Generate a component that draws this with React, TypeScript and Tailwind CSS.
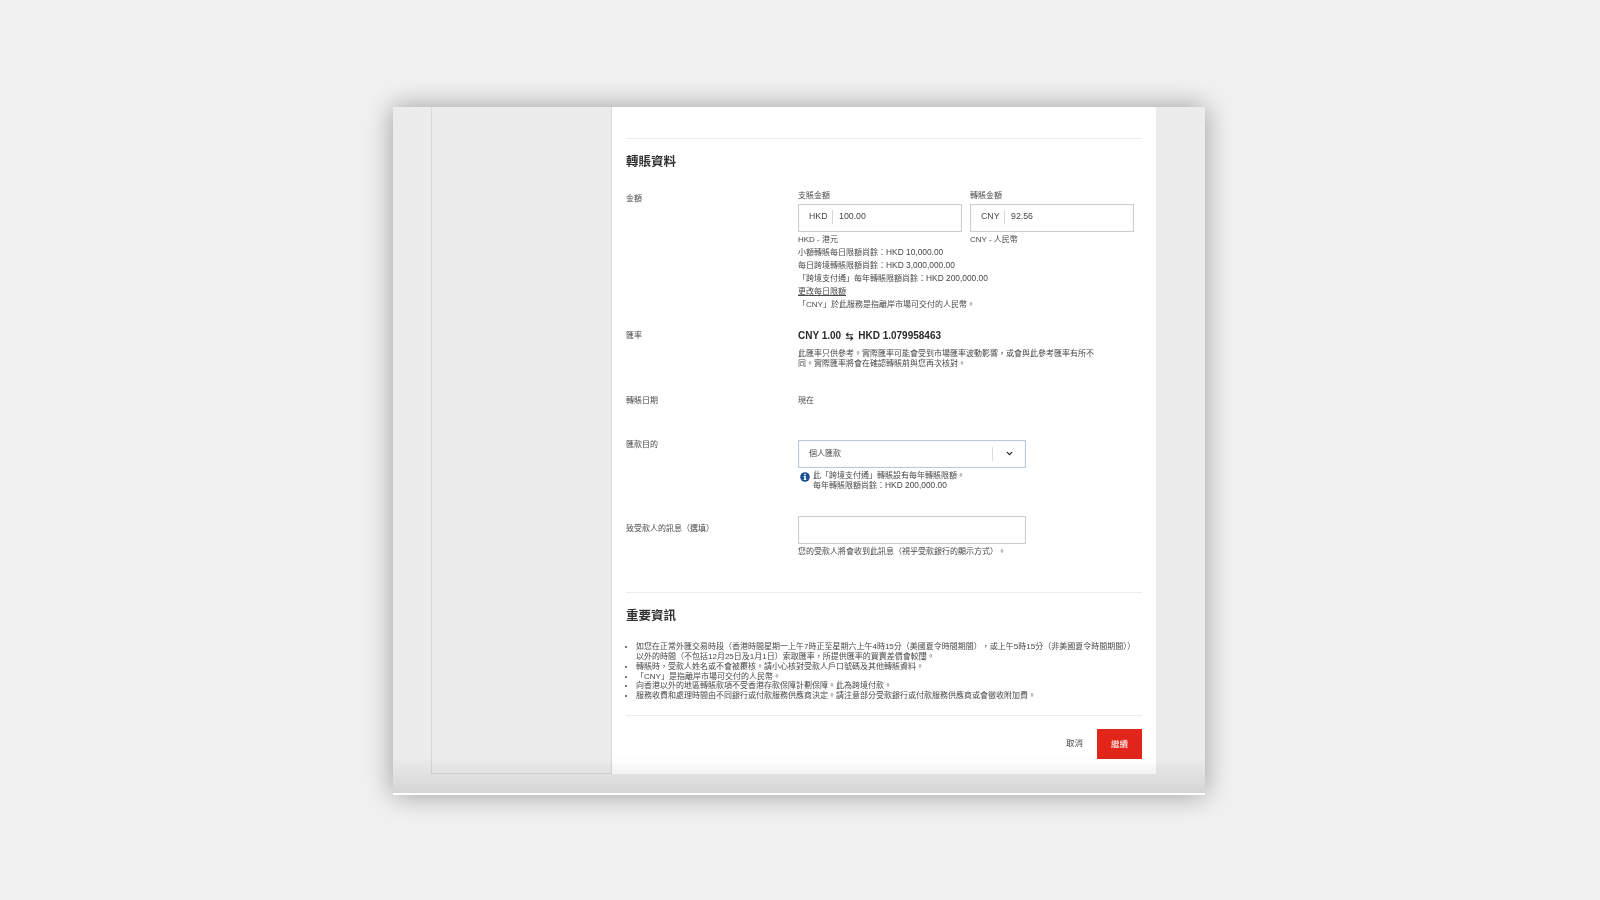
import { ChevronDown } from "lucide-react";

const font = { fontFamily: '"Liberation Sans", "Noto Sans CJK TC", sans-serif' };

function Row({ label, labelClass, children, className }: { label: string; labelClass?: string; children: React.ReactNode; className?: string }) {
  return (
    <div className={`flex ${className ?? ""}`}>
      <div className={`w-[172px] shrink-0 text-[8px] ${labelClass ?? ""}`}>{label}</div>
      <div className="flex-1">{children}</div>
    </div>
  );
}

function AmountInput({ currency, value }: { currency: string; value: string }) {
  return (
    <div className="w-[164px] h-[28px] flex items-center border border-[#cfcfcf] shadow-[inset_0_0_1px_rgba(0,0,0,0.2)] bg-white pb-[3px]">
      <span className="w-[23px] ml-[10px] text-[8.8px] leading-none -mt-[1px]">{currency}</span>
      <span className="w-px h-[14px] bg-[#d8d8d8] mr-[6px]"></span>
      <span className="text-[8.8px] leading-none">{value}</span>
    </div>
  );
}

function InfoIcon() {
  return (
    <svg viewBox="0 0 10 10" className="w-[10px] h-[10px] shrink-0 mt-[1px]">
      <circle cx="5" cy="5" r="4.8" fill="#1d4f91" />
      <rect x="4.2" y="1.8" width="1.6" height="1.5" fill="#fff" />
      <path d="M3.7 4.1H5.8V7.2H6.4V8H3.7V7.2H4.2V4.9H3.7Z" fill="#fff" />
    </svg>
  );
}

function SwapIcon() {
  return (
    <svg viewBox="0 0 10 10" className="w-[9px] h-[9px]" fill="none" stroke="#222" strokeWidth="1.2">
      <path d="M9 3H1.5M3.8 0.8L1.5 3L3.8 5.2" />
      <path d="M1 7H8.5M6.2 4.8L8.5 7L6.2 9.2" />
    </svg>
  );
}

const notes = [
  ["小額轉賬每日限額尚餘：", "HKD 10,000.00"],
  ["每日跨境轉賬限額尚餘：", "HKD 3,000,000.00"],
  ["「跨境支付通」每年轉賬限額尚餘：", "HKD 200,000.00"],
];

const infoList = [
  "轉賬時，受款人姓名或不會被覆核。請小心核對受款人戶口號碼及其他轉賬資料。",
  "「CNY」是指離岸市場可交付的人民幣。",
  "向香港以外的地區轉賬款項不受香港存款保障計劃保障。此為跨境付款。",
  "服務收費和處理時間由不同銀行或付款服務供應商決定。請注意部分受款銀行或付款服務供應商或會徵收附加費。",
];

export default function App() {
  return (
    <div className="w-[1600px] h-[900px] overflow-hidden bg-[#f1f1f1] pt-[107px] pl-[393px]" style={font}>
      <div className="relative w-[812px] h-[688px] flex bg-[#ececec] border-b-2 border-white shadow-[0_0_26px_rgba(0,0,0,0.36)]">
        <div className="w-[38px] shrink-0"></div>
        <div className="w-[181px] h-[667px] shrink-0 border-x border-b border-[#d8d8d8]"></div>
        <main className="w-[544px] h-[667px] bg-white pl-[14px] pr-[14px] pt-[31px] text-[#484848] blur-[0.35px]">
          <div className="border-t border-[#ececec] h-0"></div>
          <h2 className="mt-[15px] text-[12.5px] leading-[16px] font-bold text-[#333333]">轉賬資料</h2>

          <Row label="金額" labelClass="leading-[10px] pt-[3px]" className="mt-[21px]">
            <div className="flex gap-[8px]">
              <div>
                <div className="text-[8px] leading-[10px] mb-[3px]">支賬金額</div>
                <AmountInput currency="HKD" value="100.00" />
              </div>
              <div>
                <div className="text-[8px] leading-[10px] mb-[3px]">轉賬金額</div>
                <AmountInput currency="CNY" value="92.56" />
              </div>
            </div>
            <div className="mt-[1px] flex text-[8px] leading-[13px]">
              <div className="w-[172px]">HKD - 港元</div>
              <div>CNY - 人民幣</div>
            </div>
            <div className="text-[8px] leading-[13px]">
              {notes.map(([label, amount]) => (
                <div key={label}>
                  {label}
                  <span className="text-[8.4px]">{amount}</span>
                </div>
              ))}
              <div className="underline">更改每日限額</div>
              <div>「CNY」於此服務是指離岸市場可交付的人民幣。</div>
            </div>
          </Row>

          <Row label="匯率" labelClass="leading-[12px] pt-[1px]" className="mt-[18px]">
            <div className="flex items-center gap-[4px] text-[10px] leading-[14px] font-bold text-[#2a2a2a]">
              <span>CNY 1.00</span>
              <SwapIcon />
              <span>HKD 1.079958463</span>
            </div>
            <div className="mt-[6px] w-[297px] text-[8px] leading-[9.6px]">
              此匯率只供參考。實際匯率可能會受到市場匯率波動影響，或會與此參考匯率有所不同。實際匯率將會在確認轉賬前與您再次核對。
            </div>
          </Row>

          <Row label="轉賬日期" labelClass="leading-[12px]" className="mt-[27px]">
            <div className="text-[8px] leading-[12px]">現在</div>
          </Row>

          <Row label="匯款目的" labelClass="leading-[8px] pt-[1px]" className="mt-[33px]">
            <div className="w-[228px] h-[28px] flex items-center border border-[#bccadf] shadow-[inset_0_0_1px_rgba(120,145,185,0.6)] pl-[10px] pb-[1px] text-[8px]">
              <span className="flex-1">個人匯款</span>
              <span className="w-px h-[14px] bg-[#dcdcdc]"></span>
              <span className="w-[32px] flex justify-center">
                <ChevronDown size={9} strokeWidth={3.5} color="#222" />
              </span>
            </div>
            <div className="mt-[3px] ml-[2px] flex gap-[3px] text-[8px] leading-[9.5px]">
              <InfoIcon />
              <div>
                <div>此「跨境支付通」轉賬設有每年轉賬限額。</div>
                <div>
                  每年轉賬限額尚餘：<span className="text-[8.4px]">HKD 200,000.00</span>
                </div>
              </div>
            </div>
          </Row>

          <Row label="致受款人的訊息（選填）" labelClass="leading-[10px] pt-[8px]" className="mt-[26px]">
            <div className="w-[228px] h-[28px] border border-[#cfcfcf] shadow-[inset_0_0_1px_rgba(0,0,0,0.2)]"></div>
            <div className="mt-[3px] text-[8px] leading-[10px]">您的受款人將會收到此訊息（視乎受款銀行的顯示方式）。</div>
          </Row>

          <div className="mt-[35px] border-t border-[#ececec] h-0"></div>
          <h2 className="mt-[15px] text-[12.5px] leading-[16px] font-bold text-[#333333]">重要資訊</h2>
          <ul className="mt-[18px] list-disc pl-[10px] text-[8px] leading-[9.8px]">
            <li>
              如您在正常外匯交易時段（香港時間星期一上午7時正至星期六上午4時15分（美國夏令時間期間），或上午5時15分（非美國夏令時間期間））以外的時間（不包括12月25日及1月1日）索取匯率，所提供匯率的買賣差價會較闊。
            </li>
            {infoList.map((t) => (
              <li key={t}>{t}</li>
            ))}
          </ul>
          <div className="mt-[14px] border-t border-[#ececec] h-0"></div>
          <div className="mt-[13px] flex items-center justify-end">
            <span className="text-[8.5px] mr-[14px] -mt-[1px]">取消</span>
            <button className="w-[45px] h-[30px] bg-[#e1251b] text-white text-[8.5px]">繼續</button>
          </div>
        </main>
        <div className="flex-1"></div>
        <div className="absolute inset-x-0 bottom-0 h-[36px] bg-gradient-to-t from-black/10 to-transparent pointer-events-none"></div>
      </div>
    </div>
  );
}
